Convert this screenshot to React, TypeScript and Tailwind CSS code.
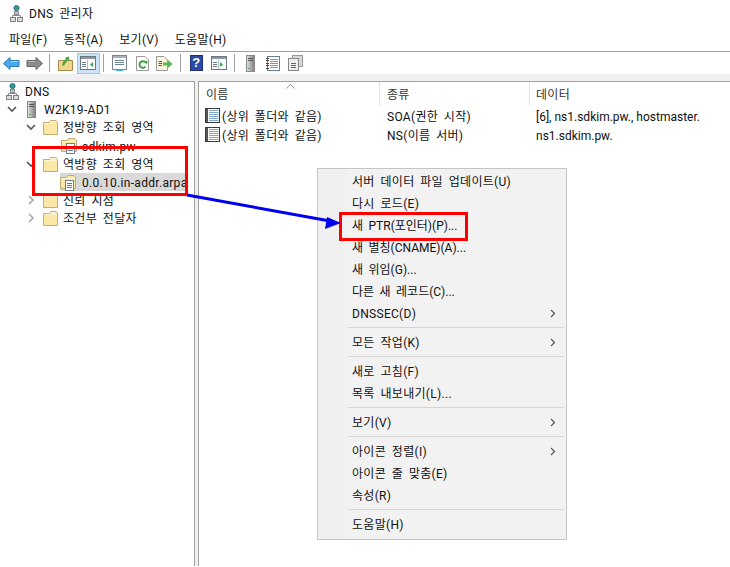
import React from "react";

const Folder = () => (
  <svg width="15" height="16" viewBox="0 0 15 16" className="shrink-0">
    <path d="M0.5 3.5 H6.5 L7.5 1.5 H13 L14.5 3.5 V15.5 H0.5 Z" fill="#fbe8a6" stroke="#c2ad78" />
    <path d="M1.5 4.5 H13.5" stroke="#fff6d2" />
    <path d="M7.5 2.5 H12.5" stroke="#fffbe8" />
  </svg>
);

const ZoneFolder = () => (
  <svg width="17" height="17" viewBox="0 0 17 17" className="shrink-0">
    <path d="M0.5 3.5 H6.5 L7.5 1.5 H14 L15.5 3.5 V14.5 H0.5 Z" fill="#fbe8a6" stroke="#c2ad78" />
    <path d="M1.5 4.5 H14.5" stroke="#fff6d2" />
    <rect x="5.5" y="6.5" width="8" height="10" fill="#fff" stroke="#6d7f93" />
    <path d="M7 9.5H12M7 11.5H12M7 13.5H12" stroke="#4f7ea8" />
  </svg>
);

const DnsIcon = () => (
  <svg width="13" height="17" viewBox="0 0 13 17" className="shrink-0">
    <circle cx="6.5" cy="3" r="2.6" fill="#3d9b6b" stroke="#2b6f9f" />
    <path d="M6.5 6V9M2.5 12V10.5H10.5V12" fill="none" stroke="#8a8a8a" />
    <rect x="4.5" y="6.5" width="4" height="3" fill="#c4c4c4" stroke="#8a8a8a" />
    <rect x="0.5" y="12.5" width="5" height="4" fill="#dedede" stroke="#808080" />
    <rect x="7.5" y="12.5" width="5" height="4" fill="#dedede" stroke="#808080" />
  </svg>
);

const ServerIcon = ({ id }: { id: string }) => (
  <svg width="9" height="17" viewBox="0 0 9 17" className="shrink-0">
    <defs>
      <linearGradient id={id} x1="0" x2="1">
        <stop offset="0" stopColor="#e4e4e4" />
        <stop offset="1" stopColor="#7c7c7c" />
      </linearGradient>
    </defs>
    <rect x="0.5" y="0.5" width="8" height="16" fill={`url(#${id})`} stroke="#8a8a8a" />
    <path d="M2 3.5H7M2 5.5H7" stroke="#555" />
    <rect x="2" y="13" width="2" height="1" fill="#5aa85a" />
  </svg>
);

const Chevron = ({ dir }: { dir: "down" | "right" }) => (
  <svg width="10" height="10" viewBox="0 0 10 10" className="shrink-0">
    {dir === "down" ? (
      <path d="M1 3 L5 7 L9 3" fill="none" stroke="#555" strokeWidth="1.6" />
    ) : (
      <path d="M3 1 L7 5 L3 9" fill="none" stroke="#a8a8a8" strokeWidth="1.6" />
    )}
  </svg>
);

const RecordIcon = () => (
  <svg width="15" height="15" viewBox="0 0 15 15" className="shrink-0">
    <rect x="0.5" y="0.5" width="14" height="14" fill="#fff" stroke="#3a3a3a" />
    <rect x="1" y="1" width="2" height="13" fill="#555" />
    <path d="M4 2.5H13.5M4 4.5H13.5M4 6.5H13.5M4 8.5H13.5M4 10.5H13.5M4 12.5H13.5" stroke="#7fa6c8" />
  </svg>
);

const Sep = () => <div className="w-px h-[18px] bg-[#a0a0a0] ml-[3.5px] mr-[4.5px]" />;

const ToolBtn = ({ children, active = false }: { children: React.ReactNode; active?: boolean }) => (
  <div className={`w-[22.5px] h-[21px] flex items-center justify-center ${active ? "bg-[#cce4f7] border border-[#99c9ef]" : ""}`}>
    {children}
  </div>
);

const WinIcon = ({ flip = false }: { flip?: boolean }) => (
  <svg width="16" height="14" viewBox="0 0 16 14">
    <rect x="0.5" y="0.5" width="15" height="13" fill="#fff" stroke="#6b7580" />
    <rect x="1" y="1" width="14" height="2" fill="#8a96a3" />
    <path d="M2 6.5H6M2 8.5H6M2 10.5H6" stroke="#6b7580" />
    <path d="M7.5 4V13" stroke="#b0b8c0" />
    <path d={flip ? "M9 6 L12 8.5 L9 11 Z" : "M13 6 L10 8.5 L13 11 Z"} fill="#3b9f4b" />
  </svg>
);

const Toolbar = () => (
  <div className="h-[22px] bg-white flex items-center pl-[0.5px]">
    <ToolBtn>
      <svg width="17" height="13" viewBox="0 0 17 13">
        <path d="M0.5 6.5 L7 0.5 V3.5 H16 V9.5 H7 V12.5 Z" fill="#4aa8e8" stroke="#2a78b8" />
        <path d="M8 4.5H15" stroke="#a8dcf8" />
      </svg>
    </ToolBtn>
    <ToolBtn>
      <svg width="17" height="13" viewBox="0 0 17 13">
        <path d="M16.5 6.5 L10 0.5 V3.5 H1 V9.5 H10 V12.5 Z" fill="#8c8c8c" stroke="#666" />
        <path d="M2 4.5H9" stroke="#bdbdbd" />
      </svg>
    </ToolBtn>
    <Sep />
    <ToolBtn>
      <svg width="15" height="15" viewBox="0 0 15 15">
        <path d="M0.5 4.5 H14.5 V14.5 H0.5 Z" fill="#f3d48c" stroke="#a88a4a" />
        <path d="M4 9 C5 5 7 4 8 3 L6.5 2 L11 0.5 L11.5 5 L10 4 C9 6 7 7 6 10 Z" fill="#4aa84a" />
      </svg>
    </ToolBtn>
    <ToolBtn active>
      <WinIcon />
    </ToolBtn>
    <Sep />
    <ToolBtn>
      <svg width="15" height="16" viewBox="0 0 15 16">
        <rect x="0.5" y="0.5" width="14" height="14" fill="#fff" stroke="#7a828c" />
        <rect x="1" y="1" width="13" height="2" fill="#aab2bc" />
        <path d="M3 5.5H12M3 7.5H12M3 9.5H12" stroke="#6f8296" />
        <rect x="4" y="14" width="7" height="2" fill="#39a9e0" />
      </svg>
    </ToolBtn>
    <ToolBtn>
      <svg width="13" height="15" viewBox="0 0 13 15">
        <path d="M0.5 0.5H9L12.5 4V14.5H0.5Z" fill="#fff" stroke="#9a9a9a" />
        <path d="M9.5 6.5 A3.3 3.3 0 1 0 9.5 10.5" fill="none" stroke="#3ea03e" strokeWidth="2" />
        <path d="M8 5 L11.5 5 L11 8.5 Z" fill="#3ea03e" />
      </svg>
    </ToolBtn>
    <ToolBtn>
      <svg width="17" height="15" viewBox="0 0 17 15">
        <path d="M0.5 0.5H8L11.5 4V14.5H0.5Z" fill="#fdf6dc" stroke="#9a9a9a" />
        <path d="M2.5 5.5H6M2.5 7.5H6M2.5 9.5H6" stroke="#555" />
        <path d="M7 6.5H12V4L16.5 8L12 12V9.5H7Z" fill="#58b858" />
      </svg>
    </ToolBtn>
    <Sep />
    <ToolBtn>
      <div className="w-[13px] h-[16px] bg-[#2a4aa8] border border-[#1d2f70] text-white text-[13px] font-bold leading-[14px] text-center tracking-normal [font-family:'Liberation_Sans',sans-serif]">
        ?
      </div>
    </ToolBtn>
    <ToolBtn>
      <WinIcon flip />
    </ToolBtn>
    <Sep />
    <ToolBtn>
      <ServerIcon id="srv-a" />
    </ToolBtn>
    <ToolBtn>
      <svg width="14" height="15" viewBox="0 0 14 15">
        <rect x="1.5" y="0.5" width="12" height="14" fill="#fff" stroke="#5f7f9f" />
        <path d="M0 2.5H3M0 4.5H3M0 7.5H3M0 9.5H3M0 12.5H3" stroke="#444" />
        <path d="M4 3.5H12M4 5.5H12M4 7.5H12M4 9.5H12M4 11.5H12" stroke="#6e9cc4" />
      </svg>
    </ToolBtn>
    <ToolBtn>
      <svg width="15" height="16" viewBox="0 0 15 16">
        <rect x="4.5" y="0.5" width="10" height="11" fill="#d8d8d8" stroke="#999" />
        <rect x="0.5" y="3.5" width="10" height="12" fill="#eee" stroke="#888" />
        <path d="M3 8.5H8M3 10.5H8M3 12.5H8" stroke="#666" />
      </svg>
    </ToolBtn>
  </div>
);

const TreeRow = ({
  indent,
  chevron,
  icon,
  iconW = "w-[20px]",
  label,
  selected = false,
}: {
  indent: string;
  chevron?: "down" | "right";
  icon: React.ReactNode;
  iconW?: string;
  label: string;
  selected?: boolean;
}) => (
  <div className={`h-[18.2px] flex items-center ${indent}`}>
    {chevron && <div className="w-[17px] flex shrink-0"><Chevron dir={chevron} /></div>}
    <div className={`flex items-center h-[18px] ${selected ? "bg-[#d9d9d9]" : ""}`}>
      <div className={`${iconW} flex shrink-0`}>{icon}</div>
      <span className="leading-[18px] whitespace-nowrap pt-[2px]">{label}</span>
    </div>
  </div>
);

const HeaderCell = ({ w, label }: { w: string; label: string }) => (
  <div className={`${w} h-[24px] flex items-center pl-[7px] border-r border-[#e5e5e5] shrink-0`}>
    <span className="pt-[2px]">{label}</span>
  </div>
);

const MItem = ({ label, sub = false, tight = false }: { label: string; sub?: boolean; tight?: boolean }) => (
  <div className="h-[22px] flex items-center justify-between pl-[34px] pr-[10px] whitespace-nowrap">
    <span className={`pt-[2px] ${tight ? "tracking-normal" : ""}`}>{label}</span>
    {sub && (
      <svg width="6" height="9" viewBox="0 0 6 9">
        <path d="M1 1 L4.5 4.5 L1 8" fill="none" stroke="#555" strokeWidth="1.2" />
      </svg>
    )}
  </div>
);

const MSep = () => <div className="h-px bg-[#d7d7d7] my-[3px] ml-[30px] mr-[2px]" />;

const DataRow = ({ kind, data }: { kind: string; data: string }) => (
  <div className="flex h-[19px] items-center">
    <div className="w-[181px] flex items-center pl-[6px] gap-[2px] shrink-0">
      <RecordIcon />
      <span className="pt-[2px]">(상위 폴더와 같음)</span>
    </div>
    <div className="w-[150px] pl-[7px] pt-[2px] shrink-0">{kind}</div>
    <div className="pl-[6px] pt-[2px] whitespace-nowrap tracking-normal [word-spacing:0px]">{data}</div>
  </div>
);

export default function App() {
  return (
    <div className="relative w-[730px] h-[567px] overflow-hidden bg-white text-[12px] text-[#111] tracking-[0.3px] [word-spacing:2.5px] [font-family:Roboto,'Noto_Sans_CJK_KR','Noto_Sans',sans-serif]">
      <div className="h-[26px] flex items-center pl-[10px] gap-[6px]">
        <DnsIcon />
        <span className="pt-[1px]">DNS 관리자</span>
      </div>
      <div className="h-[25px] flex items-center pl-[9px] gap-[16px]">
        <span className="pt-[2px]">파일(F)</span>
        <span className="pt-[2px]">동작(A)</span>
        <span className="pt-[2px]">보기(V)</span>
        <span className="pt-[2px]">도움말(H)</span>
      </div>
      <div className="h-px bg-[#a0a0a0]" />
      <Toolbar />
      <div className="h-[7px] bg-[#f0f0f0]" />
      <div className="flex h-[485px] bg-[#f0f0f0]">
        <div className="w-[195px] shrink-0 bg-white border-t border-r border-[#a0a0a0] pl-[6px]">
          <TreeRow indent="" icon={<DnsIcon />} iconW="w-[19px]" label="DNS" />
          <TreeRow indent="pl-[1px]" chevron="down" icon={<div className="pl-[3px] flex"><ServerIcon id="srv-b" /></div>} label="W2K19-AD1" />
          <TreeRow indent="pl-[20px]" chevron="down" icon={<Folder />} label="정방향 조회 영역" />
          <TreeRow indent="pl-[55px]" icon={<ZoneFolder />} iconW="w-[21px]" label="sdkim.pw" />
          <TreeRow indent="pl-[20px]" chevron="down" icon={<Folder />} label="역방향 조회 영역" />
          <TreeRow indent="pl-[54px]" icon={<ZoneFolder />} iconW="w-[22px]" label="0.0.10.in-addr.arpa" selected />
          <TreeRow indent="pl-[20px]" chevron="right" icon={<Folder />} label="신뢰 지점" />
          <TreeRow indent="pl-[20px]" chevron="right" icon={<Folder />} label="조건부 전달자" />
        </div>
        <div className="w-[3px] shrink-0" />
        <div className="flex-1 bg-white border-t border-l border-[#a0a0a0]">
          <div className="flex text-[#333]">
            <HeaderCell w="w-[181px]" label="이름" />
            <HeaderCell w="w-[150px]" label="종류" />
            <div className="pl-[6px] pt-[2px] flex items-center h-[24px]">데이터</div>
          </div>
          <DataRow kind="SOA(권한 시작)" data="[6], ns1.sdkim.pw., hostmaster." />
          <DataRow kind="NS(이름 서버)" data="ns1.sdkim.pw." />
        </div>
      </div>

      <svg width="9" height="5" viewBox="0 0 9 5" className="absolute left-[286px] top-[84px]">
        <path d="M0.5 4.5 L4.5 0.5 L8.5 4.5" fill="none" stroke="#999" />
      </svg>

      <div className="absolute left-[317px] top-[168px] w-[250px] h-[372px] bg-[#f2f2f2] border border-[#c4c4c4] py-[1px]">
        <div className="absolute left-0 top-0 bottom-0 w-[30px] bg-[#f0f0f0]" />
        <div className="relative">
          <MItem label="서버 데이터 파일 업데이트(U)" />
          <MItem label="다시 로드(E)" />
          <MItem label="새 PTR(포인터)(P)..." tight />
          <MItem label="새 별칭(CNAME)(A)..." tight />
          <MItem label="새 위임(G)..." tight />
          <MItem label="다른 새 레코드(C)..." tight />
          <MItem label="DNSSEC(D)" sub />
          <MSep />
          <MItem label="모든 작업(K)" sub />
          <MSep />
          <MItem label="새로 고침(F)" />
          <MItem label="목록 내보내기(L)..." />
          <MSep />
          <MItem label="보기(V)" sub />
          <MSep />
          <MItem label="아이콘 정렬(I)" sub />
          <MItem label="아이콘 줄 맞춤(E)" />
          <MItem label="속성(R)" />
          <MSep />
          <MItem label="도움말(H)" />
        </div>
      </div>

      <div className="absolute left-[32px] top-[146px] w-[156px] h-[50px] border-[3px] border-[#ff0000]" />
      <div className="absolute left-[339px] top-[212px] w-[129px] h-[29px] border-[3px] border-[#ff0000]" />
      <svg width="170" height="50" viewBox="0 0 170 50" className="absolute left-[185px] top-[192px]">
        <path d="M2 3 L145 29" stroke="#0000ee" strokeWidth="3" fill="none" />
        <path d="M156 31 L142 25 L140 37 Z" fill="#0000ee" />
      </svg>
    </div>
  );
}
